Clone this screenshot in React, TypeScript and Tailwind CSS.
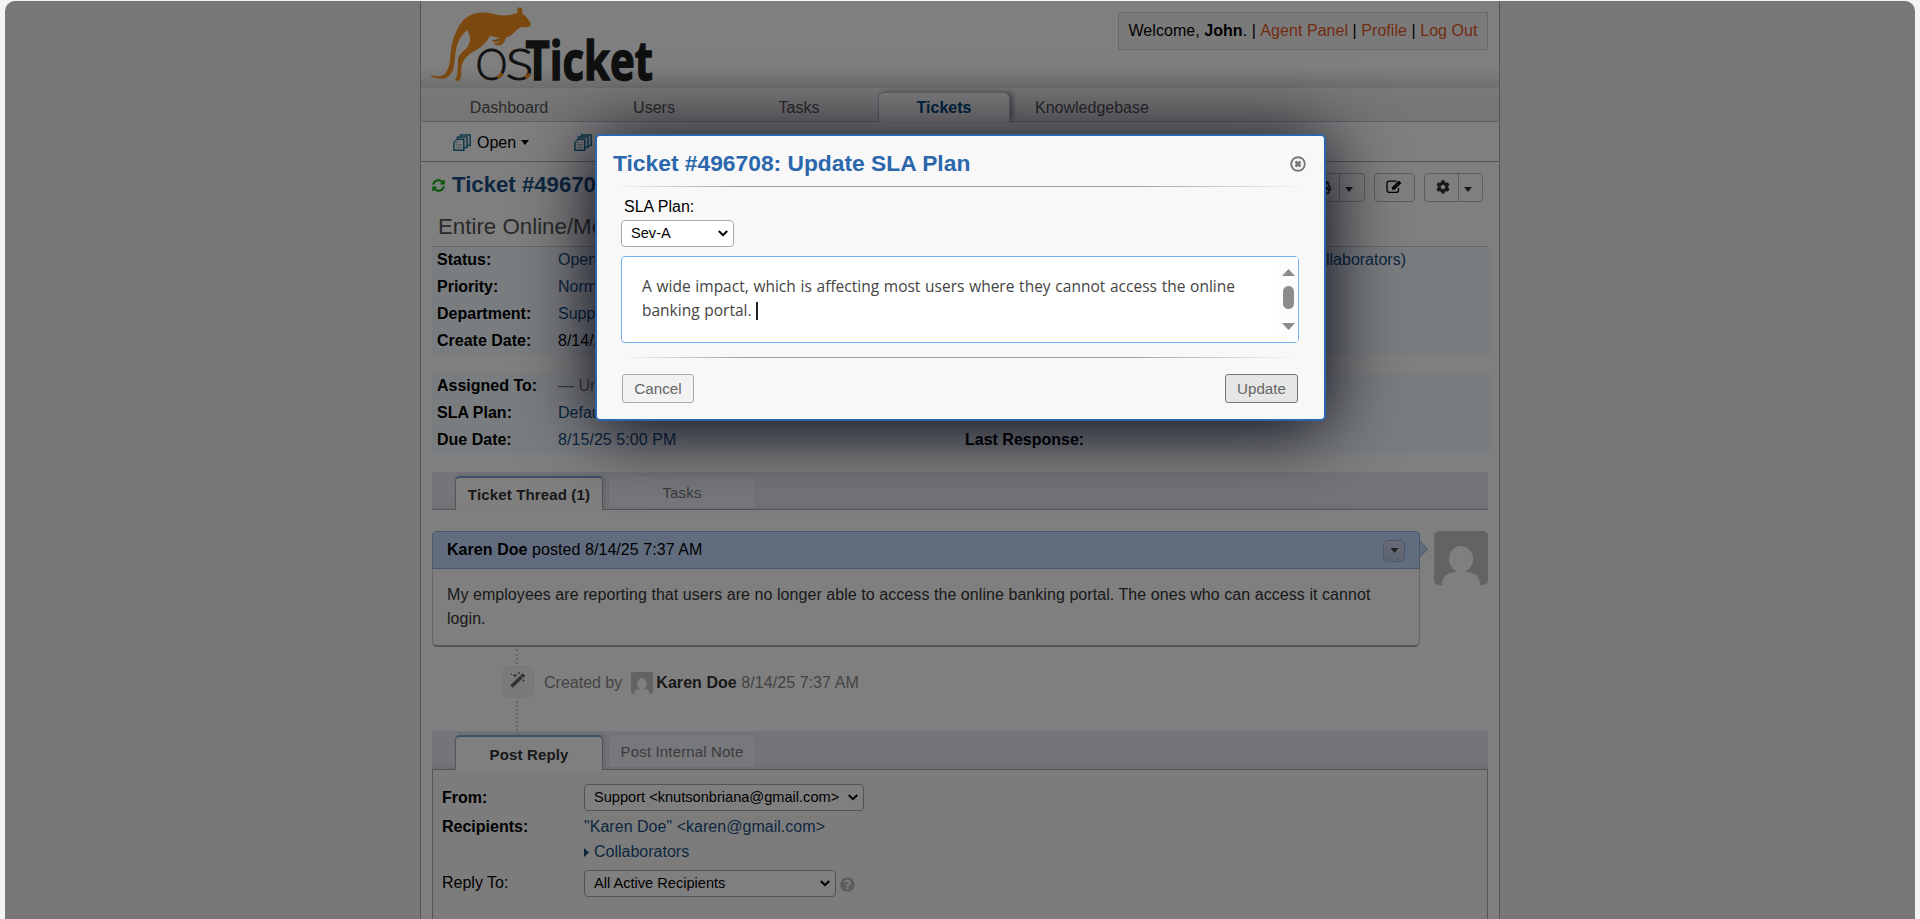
import React from "react";
import { FaCog, FaPrint, FaQuestionCircle, FaSyncAlt } from "react-icons/fa";

function Caret({ className = "" }: { className?: string }) {
  return (
    <svg viewBox="0 0 8 5" className={"h-[5px] w-2 shrink-0 fill-current " + className}>
      <path d="M0 0h8L4 5z" />
    </svg>
  );
}

function Chevron() {
  return (
    <svg viewBox="0 0 10 7" className="h-[7px] w-[10px] shrink-0" fill="none" stroke="#000" strokeWidth="2">
      <path d="M0.8 1l4.2 4.2L9.2 1" />
    </svg>
  );
}

function Select({ label, className }: { label: string; className: string }) {
  return (
    <button
      className={
        "flex h-[27px] items-center justify-between rounded-[4px] border border-[#a8a8a8] bg-white pr-[5px] pl-[9px] text-left text-[14.600px] whitespace-nowrap text-black " +
        className
      }
    >
      <span>{label}</span>
      <Chevron />
    </button>
  );
}

function Logo() {
  return (
    <svg viewBox="0 0 226 78" className="h-[78px] w-[226px] overflow-visible">
      <g transform="translate(-22 -5) scale(.33333)" fill="#f7901e">
        <path d="M64 226C80 230 96 232 106 220C118 206 120 180 122 158C124 132 130 112 140 92C152 66 168 48 192 41C212 36 232 37 252 42C274 47 292 49 308 43L323 39C320 30 322 22 327 22L330 25C333 20 338 24 337 32L337 42C346 46 354 56 362 70C364 78 358 82 350 82C340 80 332 80 324 86C314 96 302 110 288 112C286 120 284 126 276 134C268 138 258 136 253 133L253 129C262 130 268 128 271 124L272 116C262 112 250 110 242 108C234 114 230 126 218 136C204 150 184 156 170 170C160 180 156 192 154 204C152 214 156 222 152 234L146 242H136C134 238 140 232 142 224L144 180C144 168 154 158 164 150C176 138 182 124 180 112C178 104 174 98 173 90C158 100 146 118 140 140C134 162 136 186 130 208C124 226 110 236 96 236C84 236 72 233 64 230Z" />
        <path d="M246 122L270 114L284 112L280 120L262 126H248z" />
      </g>
      <text x="43.500" y="74.500" textLength="32" lengthAdjust="spacingAndGlyphs" fontFamily="Lato" fontWeight="300" fontSize="44" fill="#1e2322" stroke="#1e2322" strokeWidth="0.900">
        O
      </text>
      <text x="73.500" y="74.500" textLength="28" lengthAdjust="spacingAndGlyphs" fontFamily="Lato" fontWeight="300" fontSize="44" fill="#1e2322" stroke="#1e2322" strokeWidth="0.900">
        S
      </text>
      <path d="M65.500 73l5-4.500M93.500 73l4.500-4" stroke="#f7901e" strokeWidth="3.600" />
      <text x="93.500" y="74.700" textLength="127.500" lengthAdjust="spacingAndGlyphs" fontFamily="Open Sans" fontWeight="700" fontSize="54" fill="#1e2322" stroke="#1e2322" strokeWidth="1.500">
        Ticket
      </text>
    </svg>
  );
}

function DocsIcon() {
  return (
    <svg viewBox="0 0 18 17" className="h-[17px] w-[18px] shrink-0" fill="#eef4f6" stroke="#1f7396" strokeWidth="1.500">
      <path d="M7.500 3V1H17.200v10.500H14" />
      <path d="M4.500 5V3H14v10.500H11" />
      <path d="M4 5.300h6.800v11H0.900V8.500z" />
      <path d="M4.300 5.500v3H1M3 10.800h6M3 13.300h6" strokeWidth="0.700" stroke="#7f9aa5" />
    </svg>
  );
}

function EditIcon() {
  return (
    <svg viewBox="0 0 16 13" className="mr-px mb-[2px] h-[13px] w-4" fill="none" stroke="#000">
      <path d="M12.500 8v2.300a2 2 0 0 1-2 2h-7.500a2 2 0 0 1-2-2V3.200a2 2 0 0 1 2-2h7.500" strokeWidth="1.300" />
      <path d="M6 9.800V7.200L12.700 0.500l2.700 2.600L8.700 9.800z" fill="#000" stroke="none" />
      <path d="M7 8.800l0.900-.1M8.600 7.200l3.300-3.300" stroke="#999" strokeWidth="0.700" />
    </svg>
  );
}

function WandIcon() {
  return (
    <svg viewBox="0 0 16 16" className="mb-1 h-4 w-4" fill="none" stroke="#606060">
      <path d="M1.500 14.500L14 2.500" strokeWidth="3.400" />
      <path d="M11 4l1.800 1.800" stroke="#f4f4f4" strokeWidth="0.800" />
      <path d="M5 1.500v4M3 3.500h4M9 0v2M8 1h2M1.500 1.500v1.600M13.500 7.500v2M12.500 8.500h2" strokeWidth="0.900" />
    </svg>
  );
}

function Avatar({ className }: { className: string }) {
  return (
    <svg viewBox="0 0 54 54" className={className}>
      <rect width="54" height="54" rx="5" fill="#c6c6c6" />
      <ellipse cx="27" cy="28" rx="12" ry="13" fill="#fff" />
      <path d="M8 54C8 45 14 41.500 22 41V37h10v4C41 41.500 46 45 46 54z" fill="#fff" />
    </svg>
  );
}

function Row({ label, value, valueClass = "text-[#184e81]" }: { label: string; value?: string; valueClass?: string }) {
  return (
    <div className="flex h-[27px] items-center pb-[2px] whitespace-nowrap">
      <span className="w-[121px] font-bold">{label}</span>
      {value && <span className={valueClass}>{value}</span>}
    </div>
  );
}

function TabBand({ active, other, className }: { active: string; other: string; className: string }) {
  return (
    <div className={"flex border-b border-[#aaa] bg-linear-to-b from-[#e6eaf3] from-80% to-[#dbdee6] pl-[23px] " + className}>
      <div className="mt-1 -mb-px flex w-[148px] items-center justify-center rounded-t-[5px] border border-t-2 border-b-0 border-[#aaa] border-t-[#7aa2d6] bg-white pt-[3px] text-[15px] font-bold tracking-[0.15px] text-[#333] shadow-[2px_-1px_4px_rgba(0,0,0,0.12)]">
        {active}
      </div>
      <div className="mt-[3px] mb-[2px] ml-[5px] flex w-[148px] items-center justify-center rounded-t-[5px] border border-b-0 border-[#dcdfe6] bg-[#eff1f6] pt-[3px] text-[15px] tracking-[0.15px] text-[#777]">
        {other}
      </div>
    </div>
  );
}

const btn = "flex h-[29px] items-center rounded-[4px] border border-[#bbb] text-[#333]";

function Page() {
  return (
    <div className="mx-auto flex h-full w-[1080px] flex-col border-x border-[#aaa] bg-white">
      <header className="flex h-[86px] shrink-0 justify-between bg-linear-to-b from-white from-78% to-[#dedede] pr-[11px] pl-[11px]">
        <div className="pt-1">
          <Logo />
        </div>
        <div className="mt-[11px] flex h-[38px] w-[370px] items-center justify-center border border-[#d4d4d4] bg-[#f5f5f5] tracking-[0.05px] whitespace-pre">
          Welcome, <b>John</b>. | <span className="text-[#e65524]">Agent Panel</span> | <span className="text-[#e65524]">Profile</span> |{" "}
          <span className="text-[#e65524]">Log Out</span>
        </div>
      </header>
      <nav className="flex h-[35px] shrink-0 items-end gap-[14px] border-t border-b border-t-[#dcdcdc] border-b-[#b4c6d8] bg-linear-to-b from-[#f2f2f2] to-[#eaeaea] pl-[22px] text-[#555]">
        {["Dashboard", "Users", "Tasks"].map((t) => (
          <div key={t} className="flex h-[29px] w-[131px] items-center justify-center pt-[3px] pl-px">
            {t}
          </div>
        ))}
        <div className="-mb-px flex h-[30px] w-[132px] items-center justify-center rounded-t-[6px] border border-b-0 border-[#b4c6d8] bg-white font-bold text-[#004a80] shadow-[4px_-1px_5px_-1px_rgba(0,0,0,0.35)]">
          Tickets
        </div>
        <div className="flex h-[29px] w-[131px] items-center justify-start pt-[3px] pl-[11px]">Knowledgebase</div>
      </nav>
      <div className="flex h-[40px] shrink-0 items-center border-b border-[#aaa] pt-[2px] pl-8">
        <DocsIcon />
        <span className="ml-[6px]">Open</span>
        <Caret className="ml-[5px]" />
        <div className="ml-[45px]">
          <DocsIcon />
        </div>
      </div>
      <div className="flex h-[57px] shrink-0 justify-between pt-[11px] pr-[16px] pl-[11px]">
        <div className="-mt-[2px] flex h-7 items-center whitespace-nowrap">
          <FaSyncAlt className="mt-px h-[13px] w-[13px] text-[#12b012]" />
          <h2 className="ml-[7px] text-[22.200px] font-bold text-[#184e81]">Ticket #496708</h2>
        </div>
        <div className="flex gap-[9px]">
          <div className={btn + " w-[68px]"}>
            <div className="flex w-[41px] justify-end pr-[8px]">
              <FaPrint className="h-[13px] w-[13px]" />
            </div>
            <div className="flex h-full flex-1 items-center justify-center border-l border-[#bbb] pr-[6px]">
              <Caret className="mt-[3px]" />
            </div>
          </div>
          <div className={btn + " w-[41px] justify-center text-black"}>
            <EditIcon />
          </div>
          <div className={btn + " w-[59px]"}>
            <div className="flex w-[33px] justify-center pb-px pl-[3px]">
              <FaCog className="h-[14px] w-[14px]" />
            </div>
            <div className="flex h-full flex-1 items-center justify-center border-l border-[#bbb] pr-[6px]">
              <Caret className="mt-[3px]" />
            </div>
          </div>
        </div>
      </div>
      <div className="mr-[11px] ml-[11px] flex h-[28px] shrink-0 border-b border-[#ccc] pl-[6px] text-[22.300px] leading-[16px] whitespace-nowrap text-[#555]">
        Entire Online/Mobile Banking Portal
      </div>
      <section className="mr-[9px] ml-[11px] flex h-[108px] shrink-0 justify-between bg-[#f4faff] pl-[5px]">
        <div>
          <Row label="Status:" value="Open" />
          <Row label="Priority:" value="Normal" />
          <Row label="Department:" value="Support" />
          <Row label="Create Date:" value="8/14/25 7:37 AM" valueClass="" />
        </div>
        <div className="flex h-[27px] items-center pr-[84px] pb-[2px] text-[#184e81]">Collaborators)</div>
      </section>
      <section className="mt-[18px] mr-[9px] ml-[11px] flex h-[81px] shrink-0 bg-[#f4faff] pl-[5px]">
        <div className="w-[528px]">
          <Row label="Assigned To:" value="— Unassigned —" valueClass="text-[#777]" />
          <Row label="SLA Plan:" value="Default SLA" />
          <Row label="Due Date:" value="8/15/25 5:00 PM" valueClass="tracking-[0.06px] text-[#184e81]" />
        </div>
        <div className="mt-[54px]">
          <Row label="Last Response:" />
        </div>
      </section>
      <TabBand active="Ticket Thread (1)" other="Tasks" className="mx-[11px] mt-[18px] h-[38px] shrink-0" />
      <div className="mx-[11px] mt-[21px] flex shrink-0">
        <article className="h-[116px] w-[988px] rounded-[5px] border border-b-2 border-[#ccc] border-b-[#aaa]">
          <div className="-mx-px -mt-px flex h-[38px] items-center rounded-t-[5px] border border-[#92aed4] bg-[#c3d9ff] pr-[14px] pl-[14px] tracking-[0.06px] whitespace-pre">
            <b>Karen Doe</b>
            <span className="flex-1"> posted 8/14/25 7:37 AM</span>
            <div className="mt-[2px] flex h-[22px] w-[22px] items-center justify-center rounded-[5px] border border-[#9aabd0] bg-linear-to-b from-[#cfdaf0] to-[#b9c6de] text-[#444]">
              <Caret className="-mt-px h-[5px] w-[9px]" />
            </div>
          </div>
          <p className="pt-[14px] pr-[30px] pl-[14px] leading-6 tracking-[0.06px] text-[#333]">
            My employees are reporting that users are no longer able to access the online banking portal. The ones who can access it cannot login.
          </p>
        </article>
        <svg viewBox="0 0 8 16" className="mt-[10px] h-4 w-2">
          <path d="M0 0l8 8-8 8z" fill="#c3d9ff" />
          <path d="M0 0l7.500 8L0 16" fill="none" stroke="#92aed4" />
        </svg>
        <Avatar className="ml-[6px] h-[54px] w-[54px]" />
      </div>
      <div className="ml-[81px] flex h-[84px] shrink-0">
        <div className="flex w-8 flex-col">
          <div className="mt-[2px] ml-[14px] h-[15px] border-l-2 border-dotted border-[#ccc]" />
          <div className="my-[2px] flex h-8 w-8 shrink-0 items-center justify-center rounded-[8px] border border-[#eaeaea] bg-[#f4f4f4]">
            <WandIcon />
          </div>
          <div className="mt-px ml-[14px] flex-1 border-l-2 border-dotted border-[#ccc]" />
        </div>
        <div className="mt-[24px] ml-[10px] flex h-6 items-center whitespace-pre text-[#888]">
          Created by
          <Avatar className="mr-[3px] ml-[9px] h-[22px] w-[22px]" />
          <b className="tracking-[0.06px] text-[#333]">Karen Doe</b>
          <span className="tracking-[0.06px]"> 8/14/25 7:37 AM</span>
        </div>
      </div>
      <TabBand active="Post Reply" other="Post Internal Note" className="mx-[11px] h-[39px] shrink-0" />
      <section className="mx-[11px] min-h-0 flex-1 border-x border-[#aaa] bg-[#f9f9f9] pt-[14px] pl-[9px]">
        <div className="flex h-[27px] items-center">
          <b className="w-[142px]">From:</b>
          <Select label="Support <knutsonbriana@gmail.com>" className="w-[280px]" />
        </div>
        <div className="flex h-[32px] items-center">
          <b className="w-[142px]">Recipients:</b>
          <span className="tracking-[0.03px] text-[#184e81]">"Karen Doe" &lt;karen@gmail.com&gt;</span>
        </div>
        <div className="flex h-[18px] items-center pl-[142px] text-[#184e81]">
          <svg viewBox="0 0 5 9" className="mr-[5px] h-[9px] w-[5px] fill-current">
            <path d="M0 0l5 4.500L0 9z" />
          </svg>
          Collaborators
        </div>
        <div className="mt-[9px] flex h-[27px] items-center">
          <span className="w-[142px] pb-px">Reply To:</span>
          <Select label="All Active Recipients" className="w-[252px]" />
          <FaQuestionCircle className="mt-[2px] ml-1 h-[15px] w-[15px] text-[#bbb]" />
        </div>
      </section>
    </div>
  );
}

const rule = "h-px bg-[linear-gradient(to_right,transparent,#a0a0a0_18%,#a0a0a0_75%,transparent)]";

function SlaDialog() {
  return (
    <div className="absolute top-[134px] left-[595px] flex h-[287px] w-[731px] flex-col rounded-[5px] border-2 border-[#2a67ac] bg-[#f8f8f8] shadow-[0_6px_75px_#000011]">
      <div className="flex h-[50px] items-center justify-between pr-[18px] pl-[16px]">
        <h3 className="mt-[5px] text-[22.800px] font-bold whitespace-nowrap text-[#2a67ac]">Ticket #496708: Update SLA Plan</h3>
        <svg viewBox="0 0 16 16" className="mt-[5px] h-4 w-4" fill="none" stroke="#777">
          <circle cx="8" cy="8" r="6.800" strokeWidth="1.900" />
          <path d="M5.500 5.500l5 5M10.500 5.500l-5 5" strokeWidth="2.700" />
        </svg>
      </div>
      <div className={"mr-[18px] ml-[15px] " + rule} />
      <div className="flex flex-1 flex-col pr-[26px] pl-[24px]">
        <label className="mt-[8px] flex h-6 items-center pl-[3px]">SLA Plan:</label>
        <Select label="Sev-A" className="mt-px w-[113px]" />
        <div className="mt-[9px] flex h-[87px] w-[678px] justify-between rounded-[4px] border border-[#74aeec] bg-white">
          <p className="pt-[17px] pl-[20px] font-['Open_Sans',sans-serif] text-[15.500px] leading-6 [word-spacing:0.7px] whitespace-nowrap text-[#444]">
            A wide impact, which is affecting most users where they cannot access the online
            <br />
            banking portal.
            <span className="ml-[4px] inline-block h-[18px] w-[2px] bg-[#222] align-[-4px]" />
          </p>
          <div className="flex w-[19px] flex-col items-center bg-[#fcfcfc] pt-3 text-[#8b8b8b]">
            <svg viewBox="0 0 13 7" className="h-[7px] w-[13px] fill-current">
              <path d="M0 7L6.500 0 13 7z" />
            </svg>
            <div className="mt-[10px] h-[23px] w-[11px] rounded-full bg-[#8b8b8b]" />
            <svg viewBox="0 0 13 7" className="mt-[14px] h-[7px] w-[13px] fill-current">
              <path d="M0 0h13L6.500 7z" />
            </svg>
          </div>
        </div>
        <div className={"mt-[14px] " + rule} />
        <div className="mt-[16px] flex justify-between pl-px text-[15.200px] text-[#666]">
          <button className="h-[29px] w-[72px] rounded-[3px] border border-[#aaa] bg-[#f2f2f2] pb-px">Cancel</button>
          <button className="h-[29px] w-[73px] rounded-[3px] border border-[#777] bg-[#e6e6e6] pb-px">Update</button>
        </div>
      </div>
    </div>
  );
}

export default function App() {
  return (
    <div className="relative h-[919px] w-[1920px] overflow-hidden bg-[#f3f5f5] px-[5px] pt-px font-['Liberation_Sans',Arial,sans-serif] text-[16px] leading-tight text-black">
      <div className="relative h-full overflow-hidden rounded-t-[10px] bg-[#eee]">
        <Page />
        <div className="absolute inset-0 bg-black/50" />
      </div>
      <SlaDialog />
    </div>
  );
}
